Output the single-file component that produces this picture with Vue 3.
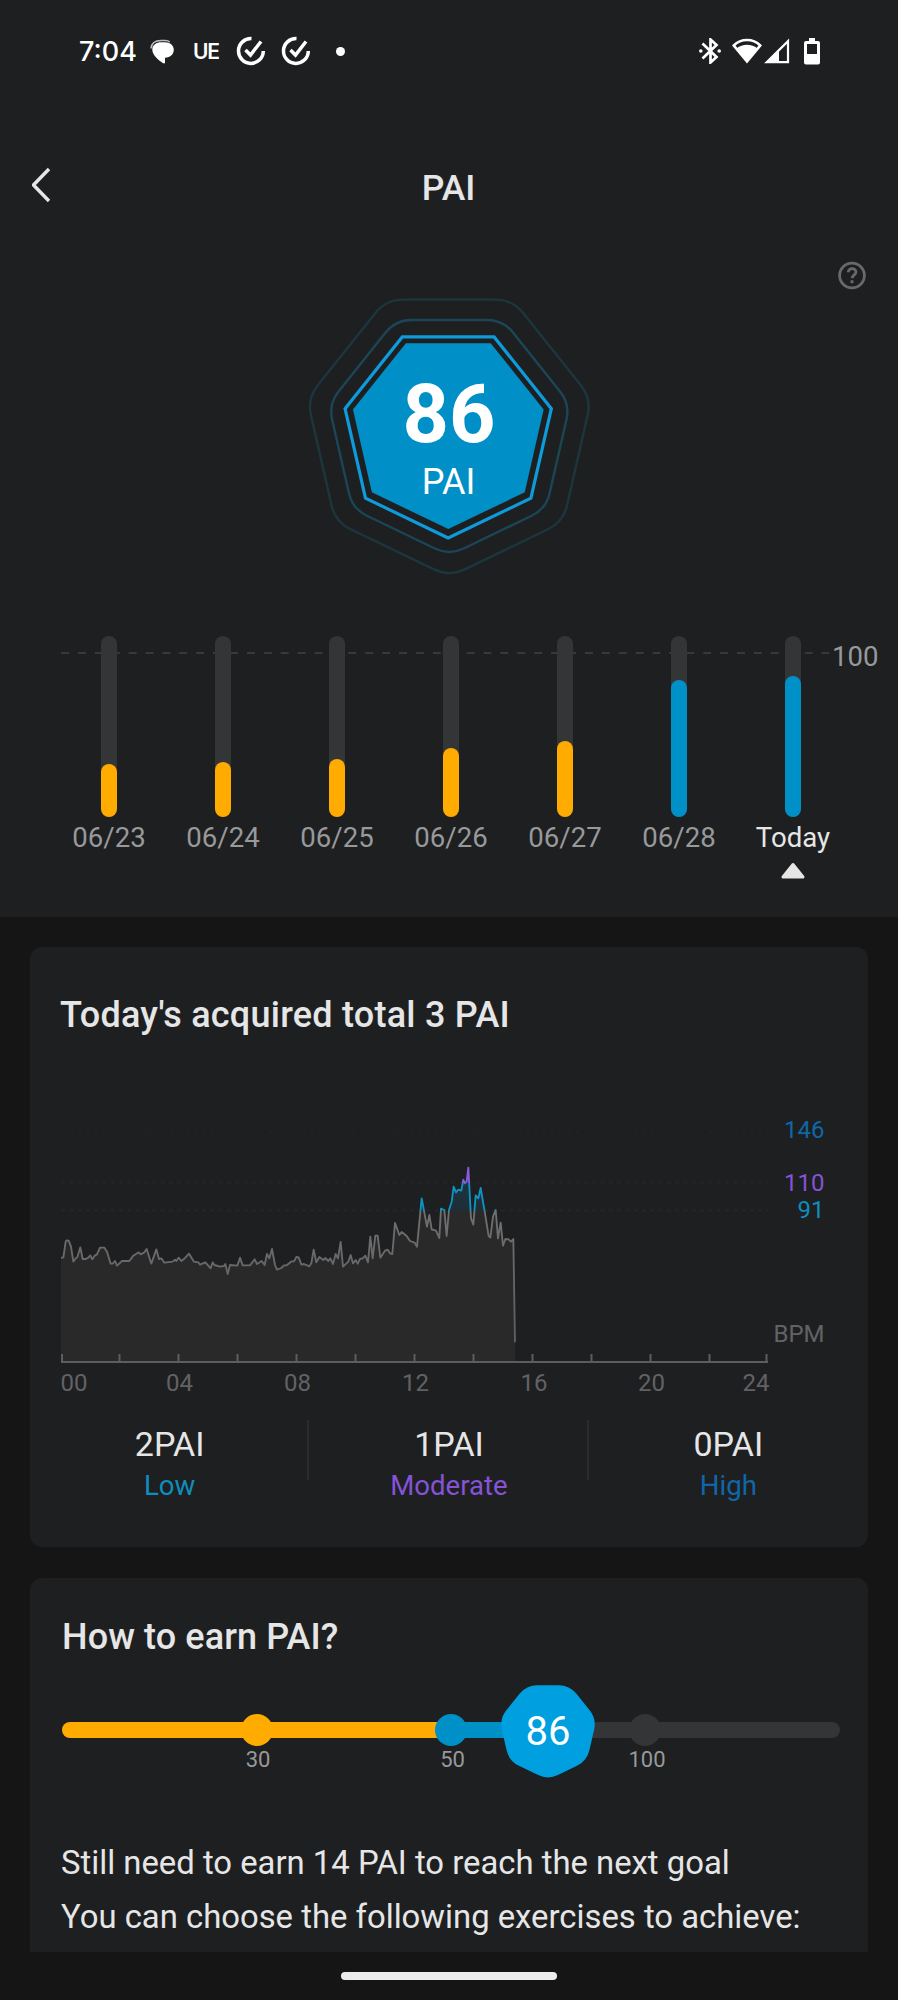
<template>
    <div class="page">
        <div class="hero">
            <div class="status-bar">
                <div class="status-left">
                    <span class="time">7:04</span>
                    <svg class="bubble" width="26" height="26" viewBox="0 0 26 26">
                        <path d="M2 9.500C2.500 4 6 1.500 12 1.500h4.500c1.800 0 3.200.5 4.300 1.500" fill="none" stroke="#bdbdbd" stroke-width="1.500" />
                        <path d="M12 3.300h4c5 0 8.800 3 8.800 7.500 0 4.500-3.300 7.700-8.800 8v5.400h-2C10 21.500 3.300 16.500 3.300 10.500c0-4.500 4.200-7.200 8.700-7.200z" fill="#fff" />
                    </svg>
                    <span class="ue">UE</span>
                    <svg v-for="n in 2" :key="n" class="check" width="30" height="30" viewBox="0 0 30 30">
                        <path d="M15.500 2.600A12.400 12.400 0 1 0 27.300 15" />
                        <path d="M9.500 14l5 5L25 5.500" />
                    </svg>
                    <i class="dot"></i>
                </div>
                <div class="status-right">
                    <svg class="bluetooth" width="22" height="26" viewBox="0 0 22 26">
                        <path d="M3.500 5.500l14 13.500-6 5.500V1.500l6 5.500-14 13.500" />
                        <circle cx="1.800" cy="13" r="1.800" />
                        <circle cx="20.200" cy="13" r="1.800" />
                    </svg>
                    <svg class="wifi" width="30" height="26" viewBox="0 0 30 26">
                        <path d="M1.800 7.500C9 .2 21 .2 28.200 7.500L15 23.500z" fill="none" stroke="#fff" stroke-width="2.600" />
                        <path d="M4.500 10.500c6-5 15-5 21 0L15 24z" fill="#fff" />
                    </svg>
                    <svg class="signal" width="26" height="26" viewBox="0 0 26 26">
                        <path d="M2.800 24.200H24V3.200z" fill="none" stroke="#fff" stroke-width="2.200" />
                        <path d="M2 25l13-13v13z" fill="#fff" />
                    </svg>
                    <svg class="battery" width="16" height="27" viewBox="0 0 16 27">
                        <path fill-rule="evenodd" d="M5 0h6v3h3a2 2 0 0 1 2 2v19.500a2 2 0 0 1-2 2H2a2 2 0 0 1-2-2V5a2 2 0 0 1 2-2h3zM3 6v10h10V6z" fill="#fff" />
                    </svg>
                </div>
            </div>
            <div class="header">
                <svg class="back" width="20" height="36" viewBox="0 0 20 36">
                    <path d="M17 2L1.500 18 17 34" />
                </svg>
                <div class="header-title">PAI</div>
            </div>
            <div class="help-row">
                <svg width="30" height="30" viewBox="0 0 30 30">
                    <circle cx="15" cy="15.500" r="12.400" />
                    <path d="M11.200 12.300c0-5 7.800-4.600 7.800-.2 0 2.700-3.800 3-3.800 6.100" />
                    <circle class="help-dot" cx="15" cy="21.700" r="1.700" />
                </svg>
            </div>
            <svg class="badge" width="320" height="300" viewBox="0 10 320 300">
                <path class="ring outer" :d="heptagon(159.300, 151, 145.800, 17)" />
                <path class="ring middle" :d="heptagon(159.300, 151.600, 123.800, 16)" />
                <path class="ring inner" :d="heptagon(158.200, 152.200, 105.800, 0)" />
                <path class="core" :d="heptagon(158.300, 151.300, 97.800, 0)" />
                <text class="badge-score" x="159" y="162">86</text>
                <text class="badge-unit" x="158.500" y="213.500">PAI</text>
            </svg>
            <div class="week">
                <svg class="goal-line" width="768" height="2" viewBox="0 0 768 2">
                    <line x1="0" y1="1" x2="768" y2="1" />
                </svg>
                <span class="goal-label">100</span>
                <div v-for="day in days" :key="day.label" class="day" :class="{ today: day.today }">
                    <div class="track">
                        <div class="fill" :class="day.level" :style="{ height: day.height + 'px' }"></div>
                    </div>
                    <div class="day-label">{{ day.label }}</div>
                    <svg v-if="day.today" class="arrow" width="26" height="18" viewBox="0 0 26 18">
                        <path d="M13 2.500L23 15H3z" />
                    </svg>
                </div>
            </div>
        </div>

        <div class="card today-card">
            <div class="card-title">Today's acquired total 3 PAI</div>
            <svg class="heart-chart" width="778" height="290" viewBox="0 0 778 290">
                <defs>
                    <!-- zone colours change at 110 and 91 bpm -->
                    <linearGradient id="zoneLine" gradientUnits="userSpaceOnUse" x1="0" y1="0" x2="0" y2="1000">
                        <stop offset="0.100" stop-color="#8a5be0" />
                        <stop offset="0.100" stop-color="#0f92c4" />
                        <stop offset="0.183" stop-color="#0f92c4" />
                        <stop offset="0.183" stop-color="#707071" />
                        <stop offset="0.500" stop-color="#606062" />
                    </linearGradient>
                    <linearGradient id="zoneFill" gradientUnits="userSpaceOnUse" x1="0" y1="0" x2="0" y2="1000">
                        <stop offset="0.100" stop-color="#35294e" />
                        <stop offset="0.100" stop-color="#1b3440" />
                        <stop offset="0.183" stop-color="#1f2e35" />
                        <stop offset="0.183" stop-color="#29292a" />
                    </linearGradient>
                </defs>
                <g class="grid">
                    <line class="faint" x1="1" y1="21.500" x2="708" y2="21.500" />
                    <line x1="1" y1="72.500" x2="708" y2="72.500" />
                    <line x1="1" y1="100.500" x2="708" y2="100.500" />
                </g>
                <g transform="translate(-20 40) scale(0.33333)">
                    <polygon :points="'63,636 ' + heartRate + ' 1425,636'" fill="url(#zoneFill)" />
                    <polyline :points="heartRate" fill="none" stroke="url(#zoneLine)" stroke-width="5.500" stroke-linejoin="round" />
                </g>
                <g class="axis">
                    <line x1="1" y1="252" x2="708" y2="252" />
                    <line v-for="x in ticks" :key="x" :x1="x" :x2="x" y1="244" y2="252" />
                </g>
                <g class="hours">
                    <text v-for="hour in hours" :key="hour.text" :x="hour.x" y="280.500" :text-anchor="hour.anchor">{{ hour.text }}</text>
                </g>
                <g class="zones">
                    <text class="high" x="764.500" y="28">146</text>
                    <text class="moderate" x="764.500" y="80.500">110</text>
                    <text class="low" x="764.500" y="108">91</text>
                    <text class="bpm" x="764.500" y="232">BPM</text>
                </g>
            </svg>
            <div class="stats">
                <div v-for="stat in stats" :key="stat.name" class="stat">
                    <div class="stat-value">{{ stat.value }}</div>
                    <div class="stat-name" :class="stat.zone">{{ stat.name }}</div>
                </div>
            </div>
        </div>

        <div class="card earn-card">
            <div class="card-title">How to earn PAI?</div>
            <svg class="slider" width="785" height="110" viewBox="0 0 785 110">
                <rect x="2" y="42" width="778" height="16" rx="8" fill="#343536" />
                <circle cx="585" cy="50" r="16" fill="#343536" />
                <rect x="375" y="42" width="113" height="16" fill="#0090c8" />
                <path d="M391 42H10a8 8 0 0 0 0 16h381z" fill="#ffab00" />
                <circle cx="197" cy="50" r="16" fill="#ffab00" />
                <circle cx="391" cy="50" r="16" fill="#0090c8" />
                <path :d="heptagon(488, 50, 49.800, 11)" fill="#009fe0" />
                <text class="slider-score" x="488" y="65">86</text>
                <g class="slider-marks">
                    <text x="198" y="86.500">30</text>
                    <text x="392.500" y="86.500">50</text>
                    <text x="587" y="86.500">100</text>
                </g>
            </svg>
            <div class="advice">
                <div>Still need to earn 14 PAI to reach the next goal</div>
                <div>You can choose the following exercises to achieve:</div>
            </div>
        </div>
        <div class="nav-bar">
            <div class="nav-pill"></div>
        </div>
    </div>
</template>
<script setup>
    const days = [
        { label: '06/23', height: 53, level: 'below' },
        { label: '06/24', height: 55, level: 'below' },
        { label: '06/25', height: 58, level: 'below' },
        { label: '06/26', height: 69, level: 'below' },
        { label: '06/27', height: 76, level: 'below' },
        { label: '06/28', height: 137, level: 'good' },
        { label: 'Today', height: 141, level: 'good', today: true }
    ];
    const stats = [
        { value: '2PAI', name: 'Low', zone: 'low' },
        { value: '1PAI', name: 'Moderate', zone: 'moderate' },
        { value: '0PAI', name: 'High', zone: 'high' }
    ];
    const ticks = [2, 59.5, 118.5, 177.5, 236.5, 295.5, 354.5, 413.5, 472.5, 531.5, 590.5, 649.5, 706.5];
    const hours = [
        { text: '00', x: 0.5, anchor: 'start' },
        { text: '04', x: 119.5, anchor: 'middle' },
        { text: '08', x: 237.5, anchor: 'middle' },
        { text: '12', x: 355.5, anchor: 'middle' },
        { text: '16', x: 474, anchor: 'middle' },
        { text: '20', x: 591.5, anchor: 'middle' },
        { text: '24', x: 709.5, anchor: 'end' }
    ];
    const heartRate = [
        '63,323 70,323 77,275 80,271 86,272 93,290 100,335 107,325 112,322 121,292 128,327 137,327 145,323 151,316',
        '157,328 164,317 171,313 180,293 193,293 201,305 212,341 218,341 225,333 231,347 246,333 268,333 280,317',
        '296,307 302,313 312,308 320,297 334,341 349,298 357,327 364,325 373,338 398,335 405,329 409,333 416,323',
        '424,333 431,328 447,311 462,335 475,337 480,344 496,337 512,355 518,337 523,345 540,350 552,348 556,342',
        '563,372 570,345 592,347 600,323 608,346 630,346 644,328 651,342 665,333 674,345 681,312 688,325 696,297',
        '705,345 711,359 724,354 732,346 740,346 755,334 762,334 769,321 776,322 784,344 792,342 808,349 814,340',
        '821,299 829,337 838,321 850,330 856,324 865,333 871,325 879,342 887,312 894,325 902,276 909,350 925,335',
        '932,315 939,340 947,330 953,341 960,327 968,325 976,317 984,337 991,260 998,325 1006,257 1013,257 1021,323',
        '1035,302 1043,299 1050,310 1057,312 1065,219 1078,255 1085,246 1100,258 1110,273 1124,278 1131,290 1145,145',
        '1161,230 1168,195 1175,238 1188,242 1198,264 1203,176 1213,180 1220,258 1227,180 1235,155 1241,110 1248,127',
        '1255,119 1264,122 1270,89 1275,100 1280,95 1285,53 1293,205 1300,224 1307,136 1315,145 1322,114 1335,190',
        '1346,258 1351,263 1359,200 1367,180 1374,265 1382,218 1389,287 1396,267 1406,268 1413,275 1420,267 1425,577'
    ].join(' ');
    // heptagon pointing down, corners cut at distance t and rounded
    const heptagon = (cx, cy, r, t) => {
        const pts = [];
        for(let i = 0; i < 7; ++i) {
            const a = Math.PI / 2 + i * 2 * Math.PI / 7;
            pts.push([cx + r * Math.cos(a), cy + r * Math.sin(a)]);
        }
        const side = 2 * r * Math.sin(Math.PI / 7);
        const towards = (p, q) => [p[0] + (q[0] - p[0]) * t / side, p[1] + (q[1] - p[1]) * t / side];
        let d = "";
        for(let i = 0; i < 7; ++i) {
            const p = pts[i];
            const from = towards(p, pts[(i + 6) % 7]);
            const to = towards(p, pts[(i + 1) % 7]);
            d += (i ? 'L' : 'M') + from.join(' ') + 'Q' + p.join(' ') + ' ' + to.join(' ');
        }
        return d + 'Z';
    };
</script>
<style>
    body{
        background-color: #151515;
    }
</style>
<style scoped>
    .page{
        width: 898px;
        height: 2000px;
        overflow: hidden;
        display: flex;
        flex-direction: column;
        background-color: #151515;
        color: #e6e6e6;
        font-family: Roboto, "Liberation Sans", sans-serif;
    }
    svg{
        display: block;
        flex-shrink: 0;
    }
    .hero{
        height: 917px;
        flex-shrink: 0;
        background-color: #1e1f21;
    }
    .status-bar{
        height: 102px;
        padding: 0 78px 0 79px;
        display: flex;
        justify-content: space-between;
        align-items: center;
        color: white;
        font-family: Inter, Roboto, sans-serif;
    }
    .status-left, .status-right{
        display: flex;
        align-items: center;
    }
    .time{
        width: 70px;
        font-size: 27px;
        font-weight: 500;
    }
    .bubble{
        margin-top: 2px;
    }
    .ue{
        width: 43px;
        padding-left: 18px;
        box-sizing: border-box;
        font-size: 21px;
        font-weight: 600;
        letter-spacing: -1.2px;
    }
    .check{
        margin-left: 18px;
        margin-right: -3px;
        fill: none;
        stroke: white;
        stroke-width: 3.5;
    }
    .dot{
        width: 9px;
        height: 9px;
        margin-left: 28px;
        border-radius: 50%;
        background-color: white;
    }
    .bluetooth{
        fill: white;
    }
    .bluetooth path{
        fill: none;
        stroke: white;
        stroke-width: 2.7;
    }
    .wifi{
        margin-left: 11px;
    }
    .signal{
        margin-left: 2px;
    }
    .battery{
        margin-left: 14px;
    }
    .header{
        height: 158px;
        padding: 14px 33px 0 32px;
        box-sizing: border-box;
        display: grid;
        grid-template-columns: 20px 1fr 20px;
        align-items: center;
    }
    .back{
        margin-top: -6px;
        fill: none;
        stroke: #e6e6e6;
        stroke-width: 3.4;
    }
    .header-title{
        text-align: center;
        font-size: 35.5px;
        font-weight: 500;
        line-height: 44px;
    }
    .help-row{
        height: 30px;
        padding-right: 31px;
        display: flex;
        justify-content: flex-end;
    }
    .help-row svg{
        fill: none;
        stroke: #69696a;
        stroke-width: 2.8;
    }
    .help-row .help-dot{
        fill: #69696a;
        stroke: none;
    }
    .badge{
        margin-left: 290px;
    }
    .badge text{
        fill: white;
        text-anchor: middle;
    }
    .badge-score{
        font-size: 81px;
        font-weight: 700;
    }
    .badge-unit{
        font-size: 36px;
    }
    .ring{
        fill: none;
        stroke-width: 2.4;
    }
    .ring.outer{
        stroke: #1c363e;
    }
    .ring.middle{
        stroke: #1b4655;
    }
    .ring.inner{
        stroke: #0d9bdb;
        stroke-width: 3.2;
    }
    .core{
        fill: #008fc7;
    }
    .week{
        position: relative;
        display: flex;
        padding: 46px 0 0 52px;
    }
    .day{
        position: relative;
        width: 114px;
        display: flex;
        flex-direction: column;
        align-items: center;
    }
    .track{
        width: 16px;
        height: 181px;
        display: flex;
        align-items: flex-end;
        border-radius: 8px;
        background-color: #343536;
    }
    .fill{
        width: 16px;
        border-radius: 8px;
    }
    .fill.below{
        background-color: #ffab00;
    }
    .fill.good{
        background-color: #0090c8;
    }
    .day-label{
        padding-top: 1px;
        font-size: 27.6px;
        line-height: 40px;
        color: #98999a;
    }
    .today .day-label{
        color: #e6e6e6;
    }
    .arrow{
        margin-top: 4px;
        fill: #e6e6e6;
        stroke: #e6e6e6;
        stroke-width: 3;
        stroke-linejoin: round;
    }
    .goal-line{
        position: absolute;
        left: 61px;
        top: 62px;
        stroke: #39393b;
        stroke-width: 2;
        stroke-dasharray: 8 8.9;
    }
    .goal-label{
        position: absolute;
        left: 832px;
        top: 51px;
        font-size: 27.6px;
        line-height: 32px;
        color: #98999a;
    }
    .card{
        width: 838px;
        margin: 30px 30px 0;
        flex-shrink: 0;
        box-sizing: border-box;
        border-radius: 12px;
        background-color: #1e1f21;
    }
    .card-title{
        position: relative;
        top: 1px;
        font-size: 36px;
        font-weight: 500;
        line-height: 40px;
        letter-spacing: 0.1px;
    }
    .today-card{
        height: 600px;
        padding-top: 47px;
    }
    .today-card .card-title{
        padding-left: 30px;
        letter-spacing: 0.24px;
    }
    .heart-chart{
        margin: 76px 0 0 30px;
        font-size: 24px;
    }
    .grid line{
        stroke: #252628;
        stroke-width: 2;
        stroke-dasharray: 4 4.3;
    }
    .grid .faint{
        stroke: #212224;
    }
    .axis line{
        stroke: #5d5d5f;
        stroke-width: 2;
    }
    .hours, .bpm{
        fill: #626264;
    }
    .zones{
        text-anchor: end;
    }
    .low{
        fill: #0f8dbd;
        color: #0f8dbd;
    }
    .moderate{
        fill: #8453d6;
        color: #8453d6;
    }
    .high{
        fill: #0f67a8;
        color: #0f67a8;
    }
    .stats{
        display: flex;
        height: 80px;
        margin-top: 20px;
    }
    .stat{
        flex: 1;
        padding-top: 4px;
        text-align: center;
        background: linear-gradient(#2a2b2d, #2a2b2d) right top / 2px 60px no-repeat;
    }
    .stat:last-child{
        background: none;
    }
    .stat-value{
        font-size: 34px;
        line-height: 40px;
    }
    .stat-name{
        margin-top: 4px;
        font-size: 27.6px;
        line-height: 36px;
    }
    .earn-card{
        height: 374px;
        margin-top: 31px;
        padding: 38px 0 0 30px;
        border-radius: 12px 12px 0 0;
    }
    .earn-card .card-title{
        padding-left: 2px;
    }
    .slider{
        margin-top: 24px;
    }
    .slider text{
        text-anchor: middle;
    }
    .slider-score{
        font-size: 40px;
        fill: white;
    }
    .slider-marks{
        font-size: 22px;
        fill: #98999a;
    }
    .advice{
        margin-top: 46px;
        padding-left: 1px;
        font-size: 32.85px;
        line-height: 54px;
        white-space: nowrap;
    }
    .nav-bar{
        height: 48px;
        display: flex;
        justify-content: center;
        align-items: center;
    }
    .nav-pill{
        width: 216px;
        height: 8px;
        border-radius: 4px;
        background-color: #ececec;
    }
</style>
